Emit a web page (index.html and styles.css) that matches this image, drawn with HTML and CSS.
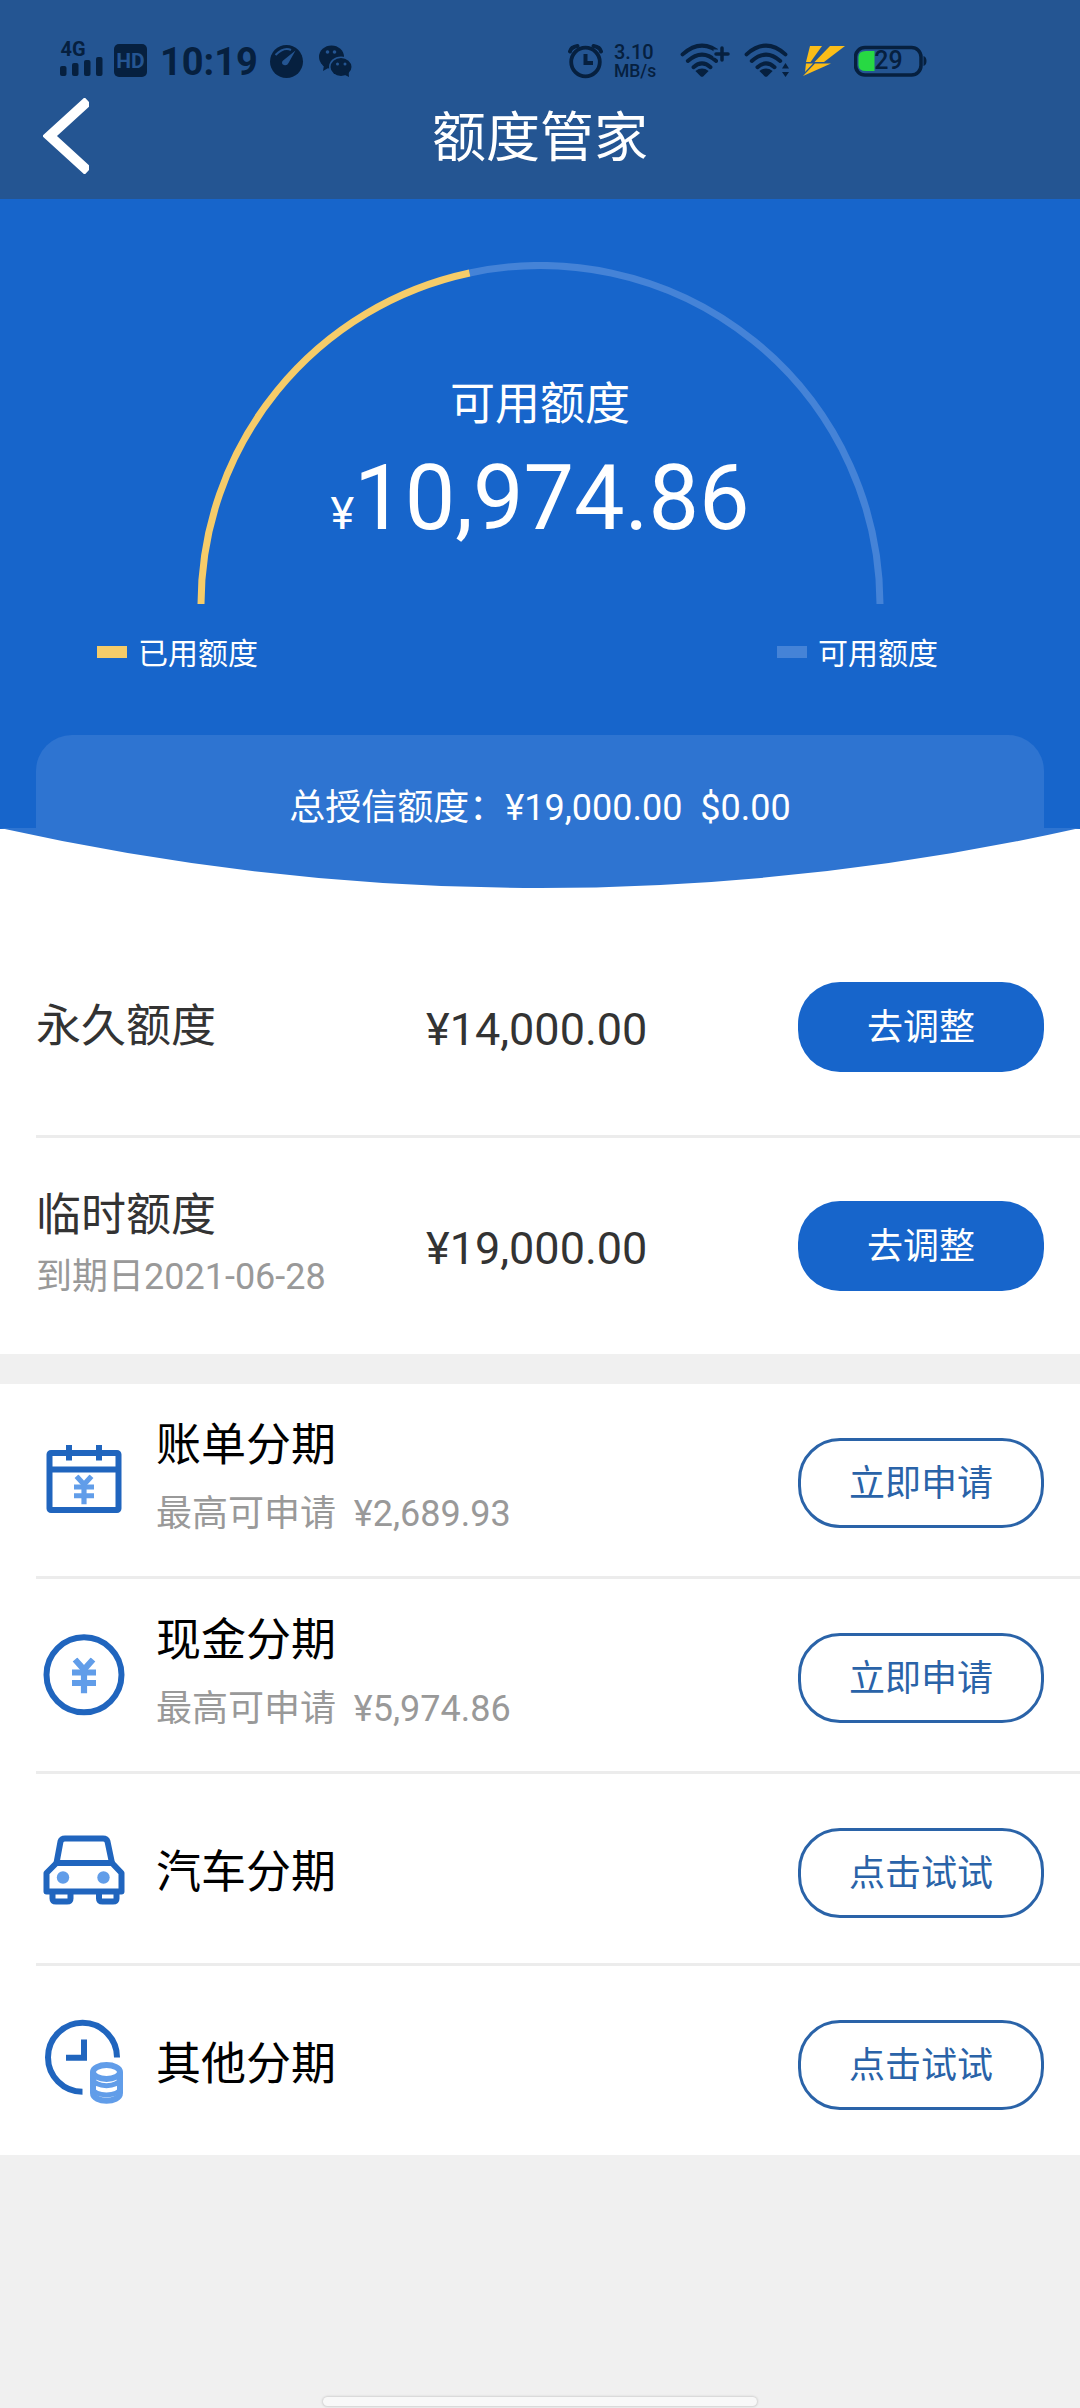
FILE: index.html
```html
<!DOCTYPE html>
<html lang="zh-CN">
<head>
<meta charset="utf-8">
<title>额度管家</title>
<link rel="stylesheet" href="styles.css">
</head>
<body>
<svg class="defs" width="0" height="0" aria-hidden="true">
  <symbol id="wifi" viewBox="0 0 46 38">
    <g fill="none" stroke="currentColor" stroke-width="4.2" stroke-linecap="round">
      <path d="M2.5 12 Q23 -6.500 43.500 12"/>
      <path d="M8 19 Q23 5.500 38 19"/>
      <path d="M14 25.500 Q23 17.500 32 25.500"/>
    </g>
    <path fill="currentColor" d="M16 29.500 Q23 24.500 30 29.500 L24.500 35 Q23 36.500 21.500 35Z"/>
  </symbol>
  <symbol id="yen" viewBox="0 0 24 36">
    <g fill="none" stroke="currentColor" stroke-width="6.2">
      <path d="M3 2 L12 12 L21 2 M12 11 V36"/>
      <path d="M0 15 H24 M0 25.500 H24"/>
    </g>
  </symbol>
</svg>

<header class="header">
  <div class="status">
    <svg class="signal" width="44" height="38" fill="currentColor">
      <text x="0.500" y="16" class="net">4G</text>
      <rect x="0" y="26" width="6.500" height="10" rx="2"/>
      <rect x="12" y="23" width="6.500" height="13" rx="2"/>
      <rect x="24" y="20" width="6.500" height="16" rx="2"/>
      <rect x="36" y="17" width="6.500" height="19" rx="2"/>
    </svg>
    <svg class="hd" width="34" height="38">
      <rect x="0" y="4" width="33" height="33" rx="5" fill="currentColor"/>
      <text x="16.500" y="27.500" text-anchor="middle" class="hd-text">HD</text>
    </svg>
    <span class="clock">10:19</span>
    <svg class="gauge-icon" width="34" height="38">
      <circle cx="16.500" cy="21.500" r="16.500" fill="currentColor"/>
      <path d="M5.500 15 Q14 6.500 21 10" fill="none" stroke="#245592" stroke-width="2"/>
      <path d="M25.500 10.500 L12.500 21 Q11 24 14 25 Q17 26 18.500 23Z" fill="#245592"/>
    </svg>
    <svg class="wechat" width="34" height="38">
      <g fill="currentColor">
        <ellipse cx="12.500" cy="17" rx="12.500" ry="11.500"/>
        <path d="M5 25 L4 31 L11 27Z"/>
      </g>
      <ellipse cx="22" cy="27" rx="12" ry="10.500" fill="#245592"/>
      <g fill="currentColor">
        <ellipse cx="22" cy="27" rx="10.500" ry="9"/>
        <path d="M24 34 L30 37 L29.500 31Z"/>
      </g>
      <g fill="#245592">
        <circle cx="8.500" cy="12" r="1.800"/><circle cx="15.500" cy="12" r="1.800"/>
        <circle cx="18.500" cy="24" r="1.500"/><circle cx="26" cy="24" r="1.500"/>
      </g>
    </svg>
    <svg class="alarm" width="36" height="40" fill="none" stroke="currentColor">
      <circle cx="17.500" cy="22" r="14.300" stroke-width="3.800"/>
      <path d="M17.500 14 V23 H25" stroke-width="4"/>
      <path d="M2 11.500 Q3 7 9.500 6 M33 11.500 Q32 7 25.500 6" stroke-width="4" stroke-linecap="round"/>
    </svg>
    <span class="speed"><span>3.10</span><span class="unit">MB/s</span></span>
    <svg class="wifi-plus" width="50" height="38">
      <use href="#wifi" x="0" y="3" width="44" height="36"/>
      <path d="M42 5 V22 M33.500 13.500 H50.500" stroke="#245592" stroke-width="8"/>
      <path d="M42 8 V20 M36 14 H48" stroke="currentColor" stroke-width="3.500" stroke-linecap="round"/>
    </svg>
    <svg class="wifi-data" width="48" height="38">
      <use href="#wifi" x="0" y="3" width="46" height="36"/>
      <path d="M39 28.500 L42.500 23 L46 28.500Z M39 32 L42.500 37 L46 32Z" fill="currentColor"/>
    </svg>
    <svg class="bolt" width="42" height="38" fill="#fbbd18">
      <path d="M7 6 H19 L7.500 22 H3Z"/>
      <path d="M27 6 H42 L21 22 H11.500Z"/>
      <path d="M3 23.500 H10 L2 32Z"/>
      <path d="M12 23.500 H28 L0 36Z"/>
    </svg>
    <svg class="battery" width="74" height="38">
      <rect x="1.500" y="7.500" width="65.500" height="27.500" rx="9.500" fill="none" stroke="currentColor" stroke-width="3.500"/>
      <path d="M12 11 H20.500 V31 H12 Q4.500 31 4.500 25 V17 Q4.500 11 12 11Z" fill="#27d943"/>
      <path d="M69.500 16 Q72.500 17 72.500 21 Q72.500 25 69.500 26Z" fill="currentColor"/>
      <text x="34.500" y="29" text-anchor="middle" class="battery-text">29</text>
    </svg>
  </div>
  <div class="title-bar">
    <svg class="back" width="46" height="76" fill="none" stroke="#fff" stroke-width="10">
      <path d="M45 3 L6.500 38 L45 73"/>
    </svg>
    <h1 class="title">额度管家</h1>
  </div>
</header>

<section class="hero">
  <div class="dial">
    <svg class="dial-arc" width="688" height="343" fill="none" stroke-width="7">
      <path d="M272.600 11 A339.500 339.500 0 0 1 683 342" stroke="#4583d7"/>
      <path d="M4 342 A339.500 339.500 0 0 1 272.600 11" stroke="#f6cc69"/>
    </svg>
    <div class="dial-text">
      <div class="dial-label">可用额度</div>
      <div class="dial-amount"><span class="dial-currency">¥</span>10,974.86</div>
    </div>
  </div>
  <div class="legend">
    <div class="legend-item"><i class="swatch used"></i>已用额度</div>
    <div class="legend-item"><i class="swatch free"></i>可用额度</div>
  </div>
  <div class="total">总授信额度：¥19,000.00&nbsp; $0.00</div>
  <svg class="curve" width="1080" height="61" viewBox="0 0 1080 61"><path d="M0 0 Q540 120 1080 0Z" fill="#2e74d1"/></svg>
</section>

<section class="limits">
  <div class="limit">
    <div class="limit-name">永久额度</div>
    <div class="limit-amount">¥14,000.00</div>
    <button class="btn solid">去调整</button>
  </div>
  <div class="limit">
    <div class="limit-name">临时额度<small class="due">到期日2021-06-28</small></div>
    <div class="limit-amount">¥19,000.00</div>
    <button class="btn solid">去调整</button>
  </div>
</section>

<section class="plans">
  <div class="plan">
    <svg class="icon" width="90" height="96" fill="none" stroke="#2065be" stroke-width="6">
      <rect x="9.500" y="17" width="69" height="57" rx="1.500"/>
      <path d="M9 33.500 H79"/>
      <path d="M29 9 V24.500 M59 9 V24.500"/>
      <use href="#yen" x="33" y="38.500" width="22" height="30" color="#619de9"/>
    </svg>
    <div class="plan-text">
      <div class="plan-name">账单分期</div>
      <div class="plan-sub">最高可申请&nbsp; ¥2,689.93</div>
    </div>
    <button class="btn line">立即申请</button>
  </div>
  <div class="plan">
    <svg class="icon" width="90" height="96" fill="none" stroke="#2065be" stroke-width="6">
      <circle cx="44" cy="43.800" r="37.500"/>
      <use href="#yen" x="32" y="26.500" width="24" height="36" color="#619de9"/>
    </svg>
    <div class="plan-text">
      <div class="plan-name">现金分期</div>
      <div class="plan-sub">最高可申请&nbsp; ¥5,974.86</div>
    </div>
    <button class="btn line">立即申请</button>
  </div>
  <div class="plan single">
    <svg class="icon" width="90" height="96" viewBox="0 -2.500 90 96" fill="none" stroke="#2065be" stroke-width="6" stroke-linejoin="round">
      <path d="M16.500 34.500 L20.500 13 Q21.500 10 25 10 H63 Q66.500 10 67.500 13 L72 34.500"/>
      <path d="M16.500 34.500 H72 L81.500 44.500 V63 H6.500 V44.500Z"/>
      <path d="M12.500 64 V70 Q12.500 73 16 73 H27 Q30.500 73 30.500 70 V64 M59 64 V70 Q59 73 62.500 73 H73 Q76.500 73 76.500 70 V64"/>
      <g fill="#619de9" stroke="none"><circle cx="23" cy="49" r="6.200"/><circle cx="63.500" cy="49" r="6.200"/></g>
    </svg>
    <div class="plan-text"><div class="plan-name">汽车分期</div></div>
    <button class="btn line">点击试试</button>
  </div>
  <div class="plan single last">
    <svg class="icon" width="90" height="96" fill="none" stroke="#2065be" stroke-width="6">
      <path d="M77 39.500 A34.500 34.500 0 1 0 42.500 73.800"/>
      <path d="M44 21.500 V39.700 H26"/>
      <g stroke="#619de9">
        <ellipse cx="66.500" cy="54" rx="13.500" ry="7"/>
        <path d="M53 54 V75 C53 85.200 80 85.200 80 75 V54"/>
        <path d="M53 60.500 C53 70 80 70 80 60.500 M53 70.500 C53 79 80 79 80 70.500" stroke-width="5"/>
      </g>
    </svg>
    <div class="plan-text"><div class="plan-name">其他分期</div></div>
    <button class="btn line">点击试试</button>
  </div>
</section>

<footer class="home"><div class="home-bar"></div></footer>
</body>
</html>
```
FILE: styles.css
```css
* { box-sizing: border-box; }

body {
  margin: 0;
  width: 1080px;
  height: 2408px;
  display: flex;
  flex-direction: column;
  overflow: hidden;
  background: #f0f0f0;
  color: #333;
  font-family: Roboto, "Noto Sans CJK SC", sans-serif;
  font-size: 45px;
}

svg { display: block; flex: none; }
.defs { position: absolute; }

/* Header */
.header { height: 199px; background: #245592; flex: none; }

.status {
  display: flex;
  align-items: flex-start;
  height: 92px;
  padding: 40px 0 0 60px;
  color: #06203f;
}
.signal { overflow: visible; }
.net { font-size: 20px; font-weight: 700; }
.hd { margin-left: 10px; }
.hd-text { font-size: 21px; font-weight: 700; fill: #245592; }
.clock {
  width: 97px;
  margin-left: 12px;
  font-size: 38px;
  font-weight: 700;
  line-height: 45px;
  white-space: nowrap;
}
.gauge-icon { margin-left: 13px; }
.wechat { margin-left: 15px; }
.alarm { margin-left: 215px; }
.speed {
  display: flex;
  flex-direction: column;
  width: 44px;
  margin-left: 10px;
  padding-top: 1px;
  font-size: 20px;
  font-weight: 500;
  line-height: 22px;
}
.unit { font-size: 17.5px; line-height: 17px; }
.wifi-plus { margin-left: 22px; }
.wifi-data { margin-left: 13px; }
.bolt { margin-left: 12px; }
.battery { margin-left: 9px; }
.battery-text { font-size: 25px; font-weight: 500; fill: currentColor; }

.title-bar {
  display: grid;
  grid-template-columns: 45px 1fr 45px;
  padding: 6px 43px 0;
}
.title {
  margin: 0;
  padding-top: 1px;
  font-size: 54px;
  font-weight: 400;
  line-height: 80px;
  text-align: center;
  color: #fff;
}

/* Hero */
.hero {
  display: flex;
  flex-direction: column;
  flex: none;
  height: 690px;
  background: linear-gradient(#1765cb 630px, #fff 630px);
  color: #fff;
}
.dial { display: grid; width: 688px; margin: 63px auto 0 197px; }
.dial-arc, .dial-text { grid-area: 1 / 1; }
.dial-text { padding: 111px 2px 0 0; text-align: center; }
.dial-label { line-height: 64px; }
.dial-amount { margin-top: 12px; font-size: 90px; line-height: 100px; }
.dial-currency { font-size: 45px; }

.legend {
  display: flex;
  justify-content: space-between;
  height: 131px;
  padding: 27px 142px 0 97px;
}
.legend-item { display: flex; align-items: flex-start; font-size: 30px; line-height: 44px; }
.swatch { width: 30px; height: 12px; margin: 14px 11px 0 0; }
.used { background: #f6cc69; }
.free { background: #4583d7; }

.total {
  height: 93px;
  margin: 0 36px;
  border-radius: 36px 36px 0 0;
  background: #2e74d1;
  font-size: 36px;
  line-height: 146px;
  text-align: center;
  white-space: pre;
}

/* Limits */
.limits { flex: none; height: 465px; padding: 30px 0 0 36px; background: #fff; }
.limit {
  display: grid;
  grid-template-columns: 390px 1fr 246px;
  align-items: center;
  height: 216px;
  padding-right: 36px;
}
.limit + .limit { height: 219px; border-top: 3px solid #ececec; }
.limit-name { line-height: 66px; }
.limit + .limit .limit-name { padding-bottom: 3px; }
.limit-amount { line-height: 60px; padding-top: 6px; }
.due { display: block; font-size: 36px; line-height: 57px; color: #999; }

.btn {
  width: 246px;
  height: 90px;
  padding: 0 0 6px;
  border: 0;
  border-radius: 42px;
  font: inherit;
  font-size: 36px;
}
.solid { background: #1765cb; color: #fff; }
.line { border: 3px solid #2a63a8; background: #fff; color: #2a63a8; }

/* Instalment plans */
.plans { flex: none; height: 771px; margin-top: 30px; padding-left: 36px; background: #fff; }
.plan {
  display: flex;
  align-items: flex-start;
  height: 195px;
  padding: 54px 36px 0 0;
  border-bottom: 3px solid #ececec;
}
.plan.single { height: 192px; }
.plan.last { height: 189px; border-bottom: 0; }
.icon { margin: -2px 0 0 4px; }
.plan-text { flex: 1; margin: -25px 0 0 26px; }
.plan-name { line-height: 66px; color: #000; }
.plan-sub { margin-top: 2px; font-size: 36px; line-height: 66px; color: #999; }
.single .plan-text { margin-top: 12px; }

/* Home indicator */
.home { display: flex; flex: 1; align-items: flex-end; justify-content: center; padding-bottom: 2px; }
.home-bar {
  width: 434px;
  height: 9px;
  border-radius: 5px;
  background: #f8f8f8;
  box-shadow: 0 0 2px 1px #d2d2d2;
}
```
